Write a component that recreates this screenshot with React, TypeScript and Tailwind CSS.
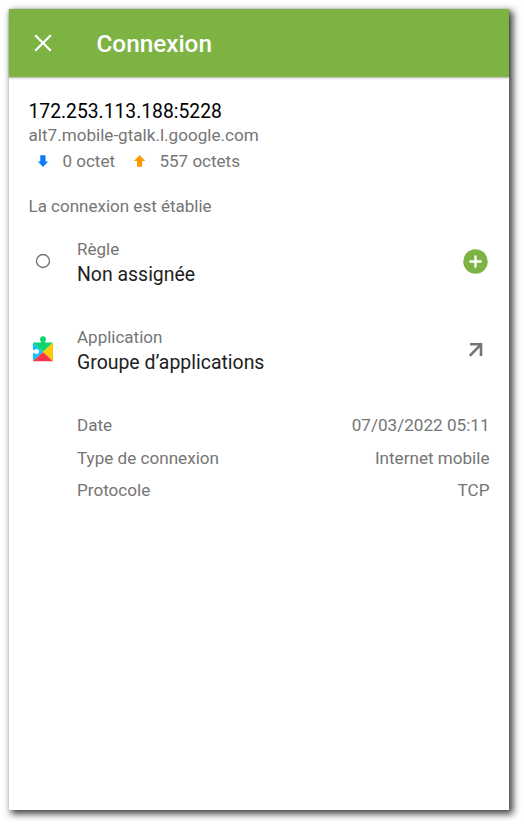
import type { ReactNode } from "react";

const details = [
  { label: "Date", value: "07/03/2022 05:11" },
  { label: "Type de connexion", value: "Internet mobile" },
  { label: "Protocole", value: "TCP" },
];

function CloseIcon() {
  return (
    <svg width="18" height="18" viewBox="0 0 18 18" fill="none" stroke="white" strokeWidth="2.3">
      <path d="M1.2 1.2 16.8 16.8M16.8 1.2 1.2 16.8" />
    </svg>
  );
}

function TrafficArrow({ up, className }: { up?: boolean; className: string }) {
  return (
    <svg width="12" height="12" viewBox="0 0 12 12" className={className} fill="currentColor">
      <path d={up ? "M5.6 0 11.2 6H8.2V11.8H3V6H0Z" : "M6 12 0.8 6.6H3.3V0.3H8.5V6.6H11.2Z"} />
    </svg>
  );
}

function PuzzleIcon() {
  return (
    <svg width="20" height="26" viewBox="0 0 20 26">
      <path d="M0 6.5H20L10 16Z" fill="#0cd66c" />
      <circle cx="10" cy="3.2" r="2.9" fill="#0cd66c" />
      <path d="M8.2 4h3.6v3H8.2z" fill="#0cd66c" />
      <path d="M0 6.5 10 16 0 25.2Z" fill="#0cc5fa" />
      <path d="M20 6.5V25.2L10 16Z" fill="#ffc908" />
      <path d="M0 25.2 10 16 20 25.2Z" fill="#fb3549" />
      <circle cx="3.6" cy="15.5" r="2.5" fill="white" />
      <path d="M0 14h3v3H0z" fill="white" />
    </svg>
  );
}

function Row({ icon, label, title, action }: { icon: ReactNode; label: string; title: string; action: ReactNode }) {
  return (
    <div className="flex h-[88px] items-start">
      <div className="flex h-[50px] w-7 items-center justify-center">{icon}</div>
      <div className="ml-5 flex-1 pt-px">
        <p className="h-[25px] text-[17px] leading-6 text-[#757575]">{label}</p>
        <p className="text-[19.45px] leading-[26px] text-[#212121]">{title}</p>
      </div>
      <div className="flex h-[50px] w-7 items-center justify-center">{action}</div>
    </div>
  );
}

export default function App() {
  return (
    <div className="h-[825px] w-[524px] overflow-hidden bg-white pl-[9px] pt-[9px] font-[Roboto,sans-serif]">
      <div className="h-[801px] w-[500px] bg-white shadow-[3px_3px_7px_1px_rgba(0,0,0,0.75)]">
        <header className="flex h-[68px] items-center bg-[#7cb342] pl-[25px] shadow-[0_1px_2px_rgba(0,0,0,0.35)]">
          <CloseIcon />
          <h1 className="ml-[44.5px] pt-0.5 text-[24.3px] leading-8 font-medium text-white">Connexion</h1>
        </header>

        <main className="pt-[22px] pr-[19.5px] pl-[19.5px]">
          <p className="h-6 text-[19.3px] leading-[26px] text-black">172.253.113.188:5228</p>
          <p className="text-[17.1px] leading-6 text-[#757575]">alt7.mobile-gtalk.l.google.com</p>
          <div className="flex h-7 items-center pl-[8.5px] text-[17px] text-[#757575]">
            <TrafficArrow className="text-[#0a7cff]" />
            <span className="ml-[13.5px] pt-0.5">0 octet</span>
            <TrafficArrow up className="ml-[19px] text-[#ff9800]" />
            <span className="ml-[13.5px] pt-0.5">557 octets</span>
          </div>
          <p className="mt-[19px] text-[17px] leading-6 text-[#757575]">La connexion est établie</p>

          <div className="mt-[18px] ml-[0.5px]">
            <Row
              icon={
                <svg width="16" height="16" viewBox="0 0 16 16" fill="none" stroke="#757575" strokeWidth="1.4">
                  <circle cx="8" cy="8" r="6.5" />
                </svg>
              }
              label="Règle"
              title="Non assignée"
              action={
                <svg width="25" height="25" viewBox="0 0 25 25">
                  <circle cx="12.5" cy="12.5" r="12.2" fill="#7cb342" />
                  <path d="M12.5 6.4V18.6M6.4 12.5H18.6" stroke="white" strokeWidth="2.4" />
                </svg>
              }
            />
            <Row
              icon={<PuzzleIcon />}
              label="Application"
              title="Groupe d’applications"
              action={
                <svg width="14" height="14" viewBox="0 0 14 14" className="mt-0.5" fill="none" stroke="#757575" strokeWidth="2.6">
                  <path d="M1 1.3H12V13M12 1.3 0.8 12.8" />
                </svg>
              }
            />
          </div>

          <dl className="ml-[48.5px] pt-px text-[17.1px] text-[#757575]">
            {details.map((item) => (
              <div key={item.label} className="flex h-[32.5px] justify-between leading-6">
                <dt>{item.label}</dt>
                <dd>{item.value}</dd>
              </div>
            ))}
          </dl>
        </main>
      </div>
    </div>
  );
}
